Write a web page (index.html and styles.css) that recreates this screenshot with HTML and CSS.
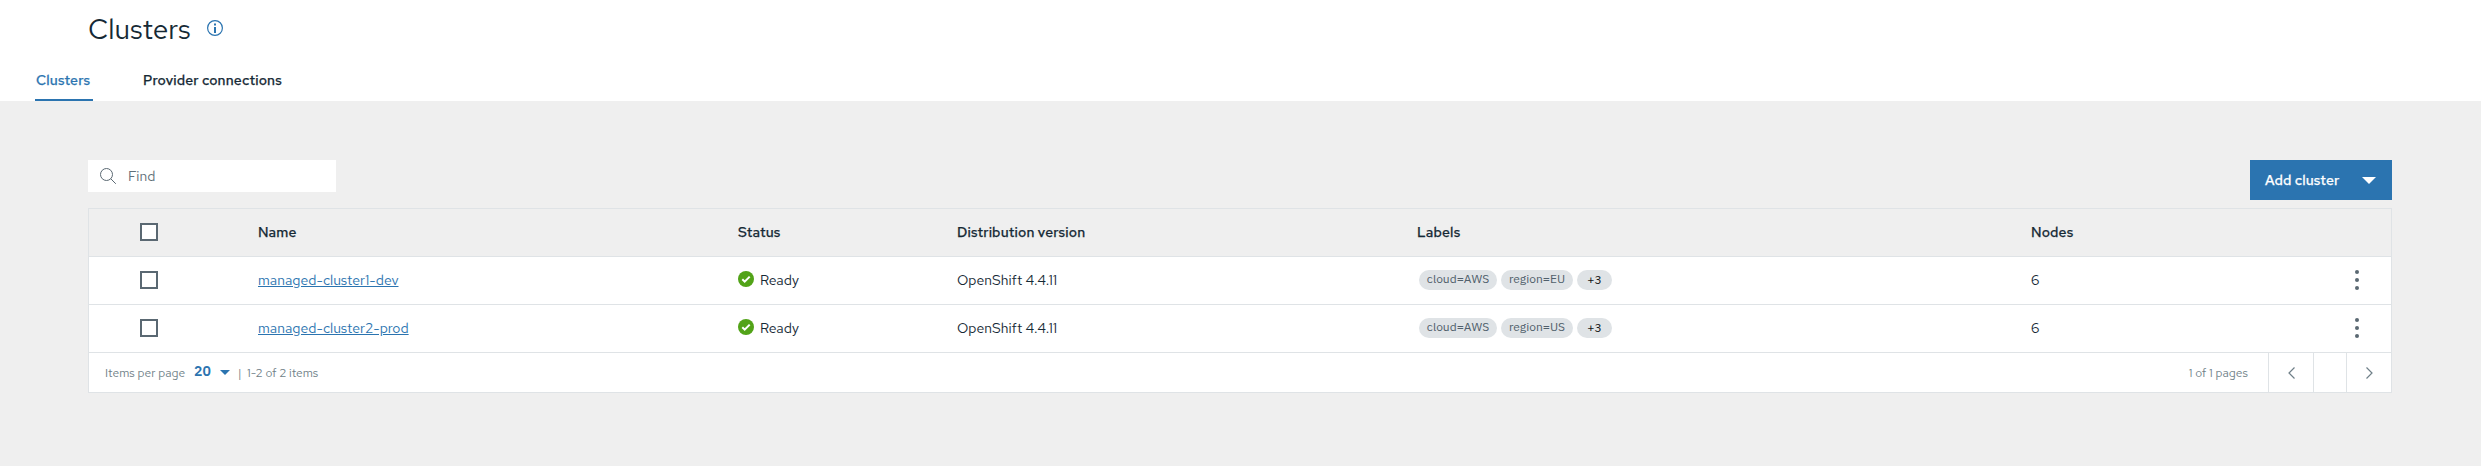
FILE: index.html
```html
<!DOCTYPE html>
<html lang="en">
<head>
<meta charset="utf-8">
<title>Clusters</title>
<link rel="stylesheet" href="styles.css">
</head>
<body>
<header class="page-header">
  <div class="title-row">
    <h1 class="title">Clusters</h1>
    <svg class="info" width="16" height="16" viewBox="0 0 16 16"><circle cx="8" cy="8" r="7.4" fill="none" stroke="#2b74b0" stroke-width="1.2"/><path d="M7 7h2v6H7zM7 3.4h2v2H7z" fill="#2b74b0"/></svg>
  </div>
  <nav class="tabs">
    <a class="tab tab-active">Clusters</a>
    <a class="tab">Provider connections</a>
  </nav>
</header>
<main class="content">
  <div class="toolbar">
    <div class="search">
      <svg width="16" height="16" viewBox="0 0 16 16" fill="none" stroke="#5a6872"><circle cx="6.5" cy="6.5" r="6"/><path d="M10.8 10.8l5 5"/></svg>
      <span>Find</span>
    </div>
    <button class="add"><span>Add cluster</span><svg width="14" height="7" viewBox="0 0 14 7"><path d="M0 0h14L7 7z" fill="#fff"/></svg></button>
  </div>
  <section class="table">
    <div class="row head">
      <div class="check-cell"><i class="checkbox"></i></div>
      <div>Name</div>
      <div>Status</div>
      <div>Distribution version</div>
      <div>Labels</div>
      <div>Nodes</div>
      <div></div>
    </div>
    <div class="row">
      <div class="check-cell"><i class="checkbox"></i></div>
      <div><a class="link">managed-cluster1-dev</a></div>
      <div class="status"><svg width="16" height="16" viewBox="0 0 16 16"><circle cx="8" cy="8" r="8" fill="#52a318"/><path d="M4.3 8.2l2.4 2.4 5-5" fill="none" stroke="#fff" stroke-width="2"/></svg><span>Ready</span></div>
      <div>OpenShift 4.4.11</div>
      <div class="tags"><span class="tag tag-a">cloud=AWS</span><span class="tag tag-b">region=EU</span><span class="tag more">+3</span></div>
      <div>6</div>
      <div><svg class="dots" width="4" height="20" viewBox="0 0 4 20" fill="#5a6872"><circle cx="2" cy="2" r="2"/><circle cx="2" cy="10" r="2"/><circle cx="2" cy="18" r="2"/></svg></div>
    </div>
    <div class="row">
      <div class="check-cell"><i class="checkbox"></i></div>
      <div><a class="link">managed-cluster2-prod</a></div>
      <div class="status"><svg width="16" height="16" viewBox="0 0 16 16"><circle cx="8" cy="8" r="8" fill="#52a318"/><path d="M4.3 8.2l2.4 2.4 5-5" fill="none" stroke="#fff" stroke-width="2"/></svg><span>Ready</span></div>
      <div>OpenShift 4.4.11</div>
      <div class="tags"><span class="tag tag-a">cloud=AWS</span><span class="tag tag-b">region=US</span><span class="tag more">+3</span></div>
      <div>6</div>
      <div><svg class="dots" width="4" height="20" viewBox="0 0 4 20" fill="#5a6872"><circle cx="2" cy="2" r="2"/><circle cx="2" cy="10" r="2"/><circle cx="2" cy="18" r="2"/></svg></div>
    </div>
    <footer class="pager">
      <span class="per-page">Items per page</span>
      <b class="size">20</b>
      <svg class="caret" width="10" height="5" viewBox="0 0 10 5"><path d="M0 0h10L5 5z" fill="#2b74b0"/></svg>
      <span class="bar">|</span>
      <span class="range">1-2 of 2 items</span>
      <span class="pages">1 of 1 pages</span>
      <div class="step"><svg width="7" height="12" viewBox="0 0 7 12"><path d="M6.5.5L1 6l5.500 5.500" fill="none" stroke="#6f7f88" stroke-width="1.2"/></svg></div>
      <div class="page-no"></div>
      <div class="step"><svg width="7" height="12" viewBox="0 0 7 12"><path d="M.5.5L6 6 .5 11.500" fill="none" stroke="#6f7f88" stroke-width="1.2"/></svg></div>
    </footer>
  </section>
</main>
</body>
</html>
```
FILE: styles.css
```css
* { box-sizing: border-box; }
body { margin: 0; min-height: 466px; background: #efefef; color: #152935; font: 14px/20px "Red Hat Text", "Noto Sans", sans-serif; }
span, a, b { white-space: nowrap; }
.page-header { height: 101px; background: #fff; display: flex; flex-direction: column; justify-content: space-between; }
.title-row { display: flex; padding: 11px 0 0 88px; }
.title { margin: 0; width: 119px; font: 400 28px/36px "Red Hat Text", "Noto Sans", sans-serif; }
.info { margin-top: 9px; }
.tabs { display: flex; gap: 48px; padding-left: 35px; }
.tab { height: 32px; padding: 1px 2px 0; border-bottom: 2px solid transparent; }
.tab, .head, .add { font-weight: 500; letter-spacing: 0.16px; -webkit-text-stroke: 0.25px currentColor; }
.tab-active { width: 58px; padding-left: 1px; color: #2b74b0; border-color: #2b74b0; }
.content { padding: 59px 89px 0 88px; }
.toolbar { display: flex; justify-content: space-between; align-items: flex-start; height: 48px; }
.search { display: flex; align-items: center; gap: 12px; width: 248px; height: 32px; padding-left: 12px; background: #fff; color: #5f6f79; }
.add { display: flex; align-items: center; justify-content: space-between; width: 142px; height: 40px; padding: 0 16px 0 15px; border: 0; background: #2b74b0; color: #fff; font-family: inherit; font-size: 14px; line-height: 20px; }
.table { border: 1px solid #dfe3e6; background: #fff; }
.row { display: grid; grid-template-columns: 169px 480px 219px 460px 614px 324px 1fr; align-items: center; height: 48px; padding-bottom: 1px; border-bottom: 1px solid #dfe3e6; }
.head { background: #efefef; }
.check-cell { padding-left: 51px; }
.checkbox { display: block; width: 18px; height: 18px; border: 2px solid #5a6872; background: #fff; }
.link { color: #2b74b0; text-decoration: underline; }
.status { display: flex; align-items: center; gap: 6px; }
.status svg { margin-top: -2px; }
.tags { display: flex; gap: 4px; padding-left: 2px; }
.tag { height: 20px; border-radius: 10px; background: #dfe3e6; color: #50606b; font: 12px/18px "IBM Plex Sans", "Noto Sans", sans-serif; display: flex; justify-content: center; }
.tag-a { width: 78px; }
.tag-b { width: 72px; }
.more { width: 35px; line-height: 20px; color: #171717; }
.dots { display: block; }
.pager { display: flex; align-items: center; height: 39px; padding-left: 16px; font-size: 12px; color: #6f7f88; }
.per-page { width: 89px; }
.size { width: 22px; margin-top: -3px; font: 600 14px/20px "IBM Plex Sans", "Noto Sans", sans-serif; color: #2b74b0; }
.caret { margin: 0 8px 0 4px; }
.bar { width: 9px; }
.range { letter-spacing: -0.05px; }
.pages { margin-left: auto; padding-right: 20px; }
.step, .page-no { height: 39px; border-left: 1px solid #dfe3e6; }
.step { width: 45px; display: flex; align-items: center; justify-content: center; }
.page-no { width: 33px; }
```
